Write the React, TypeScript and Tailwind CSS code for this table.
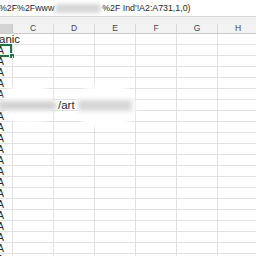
import React from 'react';

const COLS = ['C', 'D', 'E', 'F', 'G', 'H'];

function NA() {
  return (
    <div className="w-full h-full overflow-hidden flex justify-end items-center pr-[8px] whitespace-nowrap text-[10.5px] leading-[10px] text-[#2a2a2a]">
      #N/A
    </div>
  );
}

function Row({ index }: { index: number }) {
  const overflowRow = index === 6;
  const labelRow = index === 0;
  const selected = index === 1;
  return (
    <div className="flex flex-none h-[11px] border-b border-[#e2e2e2]">
      <div
        className={`relative flex-none w-[13px] h-full border-r ${
          overflowRow || labelRow ? 'border-transparent' : 'border-[#e2e2e2]'
        }`}
      >
        {labelRow && (
          <div className="h-full flex items-center ml-[-1px] whitespace-nowrap text-[11.5px] leading-[10px] text-[#262626]">
            anic
          </div>
        )}
        {overflowRow && (
          <div className="h-full flex items-center whitespace-nowrap text-[11.5px] leading-[10px] text-[#262626]">
            <span className="inline-block w-[58px] flex-none" />
            <span>/art</span>
          </div>
        )}
        {!labelRow && !overflowRow && <NA />}
        {selected && (
          <>
            <div className="absolute left-[-3px] top-[-1px] right-0 bottom-[-2px] border-2 border-[#217346]" />
            <div className="absolute right-[-2px] bottom-[-3px] w-[4px] h-[4px] bg-[#217346] outline outline-1 outline-white" />
          </>
        )}
      </div>
      {COLS.map((c, i) => (
        <div
          key={c}
          className={`flex-none w-[41px] h-full border-r ${
            overflowRow && i < 2 ? 'border-transparent' : 'border-[#e2e2e2]'
          }`}
        />
      ))}
    </div>
  );
}

export default function App() {
  const rows = Array.from({ length: 21 }, (_, i) => i);
  return (
    <div className="relative w-[256px] h-[256px] overflow-hidden bg-white font-['Liberation_Sans',Arial,sans-serif]">
      {/* formula bar */}
      <div className="h-[17px] bg-white border-b border-[#d8d8d8] flex items-center whitespace-nowrap text-[8.8px] leading-[10px] text-[#262626]">
        <span className="ml-[-1px]">%2F%2Fwww</span>
        <span className="inline-block flex-none w-[46px] h-[9px] mx-[1px] rounded-[4px] bg-[#d6d6d6] blur-[2px]" />
        <span>%2F Ind'!A2:A731,1,0)</span>
      </div>
      <div className="h-[7px] bg-[#f0f0f0]" />
      {/* column headers */}
      <div className="flex h-[10px] bg-[#f3f3f3] border-b border-[#c9c9c9] text-[8.5px] leading-[9px] text-[#444]">
        <div className="flex-none w-[13px] h-full bg-[#d4d4d4] border-r border-[#c9c9c9]" />
        {COLS.map((c) => (
          <div
            key={c}
            className="flex-none w-[41px] h-full border-r border-[#d9d9d9] flex items-center justify-center"
          >
            {c}
          </div>
        ))}
      </div>
      {/* grid */}
      <div className="flex flex-col">
        {rows.map((i) => (
          <Row key={i} index={i} />
        ))}
      </div>
      {/* redaction blur over the long text row */}
      <div className="absolute left-[3px] top-[84px] w-[50px] h-[39px] rounded-full bg-white blur-[2px]" />
      <div className="absolute left-[76px] top-[85px] w-[60px] h-[42px] rounded-full bg-white blur-[2px]" />
      <div className="absolute left-[-2px] top-[101px] w-[58px] h-[9px] bg-[#d0d0d0] blur-[2.5px]" />
      <div className="absolute left-[78px] top-[100px] w-[54px] h-[11px] bg-[#d6d6d6] blur-[2.5px]" />
    </div>
  );
}
